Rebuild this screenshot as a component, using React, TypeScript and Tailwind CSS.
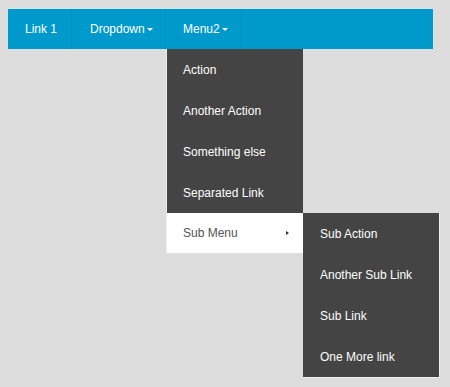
import React from "react";

const Caret = () => (
  <span className="ml-[2px] inline-block w-0 h-0 border-l-[3px] border-r-[3px] border-t-[3px] border-l-transparent border-r-transparent border-t-white align-middle" />
);

export default function App() {
  const items = ["Action", "Another Action", "Something else", "Separated Link"];
  const sub = ["Sub Action", "Another Sub Link", "Sub Link", "One More link"];
  return (
    <div className="w-[450px] h-[387px] bg-[#dddddd] p-2 font-['Liberation_Sans',Arial,sans-serif] text-[12px] whitespace-nowrap">
      <div className="relative flex h-[41px] w-[426px] bg-[#0099cc] border-t border-r border-[#cde8f2] text-white">
        <div className="flex items-center pl-[17px] border-r border-[#0090c0] w-[64px]">Link 1</div>
        <div className="flex items-center pl-[18px] border-r border-[#0090c0] w-[94px]">
          Dropdown<Caret />
        </div>
        <div className="relative flex items-center pl-[17px] border-r border-[#0090c0] w-[76px]">
          Menu2<Caret />
          <div className="absolute left-0 top-[40px] w-[137px] border-l border-[#eeeeee] z-10">
            {items.map((t) => (
              <div key={t} className="h-[41px] flex items-center px-[16px] bg-[#444444] text-white">
                {t}
              </div>
            ))}
            <div className="relative h-[40px] flex items-center justify-between pl-[16px] pr-[14px] bg-white text-[#555555]">
              <span>Sub Menu</span>
              <span className="inline-block w-0 h-0 border-t-[2px] border-b-[2px] border-l-[3px] border-t-transparent border-b-transparent border-l-[#333]" />
              <div className="absolute left-[136px] top-0 w-[137px] bg-[#444444] border-b border-r border-[#eeeeee]">
                {sub.map((t) => (
                  <div key={t} className="h-[41px] flex items-center px-[17px] text-white">
                    {t}
                  </div>
                ))}
              </div>
            </div>
          </div>
        </div>
      </div>
    </div>
  );
}
